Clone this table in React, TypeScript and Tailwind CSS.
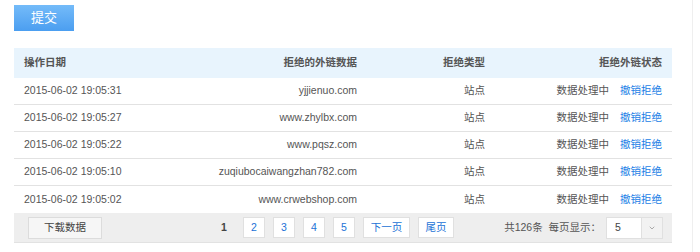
import { ChevronDown } from 'lucide-react'

const rows = [
  { time: '2015-06-02 19:05:31', domain: 'yjjienuo.com' },
  { time: '2015-06-02 19:05:27', domain: 'www.zhylbx.com' },
  { time: '2015-06-02 19:05:22', domain: 'www.pqsz.com' },
  { time: '2015-06-02 19:05:10', domain: 'zuqiubocaiwangzhan782.com' },
  { time: '2015-06-02 19:05:02', domain: 'www.crwebshop.com' },
]

const cols = 'grid grid-cols-[170px_183px_128px_177px] items-center'

export default function App() {
  return (
    <div className="w-[700px] h-[252px] bg-white text-[10.5px] text-[#555] font-['Liberation_Sans','Noto_Sans_CJK_SC',sans-serif]">
      <div className="w-[693px] h-full border-r border-[#efefef] pl-[14px] pt-[5px]">
        <button className="w-[60px] h-[26px] bg-gradient-to-b from-[#74bbf9] to-[#4b9ef0] text-white text-[13px]">
          提交
        </button>

        <div className="w-[658px] mt-[17px]">
          <div className={`${cols} h-[30px] bg-[#e8f4fd] font-bold`}>
            <div className="pl-[10px]">操作日期</div>
            <div className="text-right pr-[10px]">拒绝的外链数据</div>
            <div className="text-right pr-[10px]">拒绝类型</div>
            <div className="text-right pr-[10px]">拒绝外链状态</div>
          </div>

          {rows.map((r, i) => (
            <div key={i} className={`${cols} h-[27px] ${i < rows.length - 1 ? 'border-b border-[#e2e2e2]' : ''}`}>
              <div className="pl-[10px]">{r.time}</div>
              <div className="text-right pr-[10px]">{r.domain}</div>
              <div className="text-right pr-[10px]">站点</div>
              <div className="flex justify-end gap-[11px] pr-[10px]">
                <span>数据处理中</span>
                <a className="text-[#1a7ee6]">撤销拒绝</a>
              </div>
            </div>
          ))}

          <div className="flex items-center h-[30px] bg-[#eeeeee] border-b border-[#e2e2e2]">
            <button className="ml-[14px] w-[74px] h-[22px] bg-[#f6f6f6] border border-[#dcdcdc] text-[#444]">
              下载数据
            </button>
            <div className="ml-[111px] flex items-center gap-[8px]">
              <span className="w-[22px] text-center font-bold text-[#444]">1</span>
              {['2', '3', '4', '5'].map((n) => (
                <span key={n} className="w-[22px] h-[21px] flex items-center justify-center bg-white border border-[#e0e0e0] text-[#2272d6]">
                  {n}
                </span>
              ))}
              <span className="w-[47px] h-[21px] flex items-center justify-center bg-white border border-[#e0e0e0] text-[#2272d6]">
                下一页
              </span>
              <span className="w-[36px] h-[21px] flex items-center justify-center bg-white border border-[#e0e0e0] text-[#2272d6]">
                尾页
              </span>
            </div>
            <div className="ml-auto mr-[9px] flex items-center gap-[5px]">
              <span>共126条&nbsp;&nbsp;每页显示：</span>
              <div className="flex h-[22px] border border-[#e0e0e0]">
                <span className="w-[34px] bg-white flex items-center pl-[8px] text-[#444]">5</span>
                <span className="w-[21px] bg-[#f2f2f2] border-l border-[#e0e0e0] flex items-center justify-center">
                  <ChevronDown size={8} strokeWidth={3} className="text-[#aaa]" />
                </span>
              </div>
            </div>
          </div>
        </div>
      </div>
    </div>
  )
}
